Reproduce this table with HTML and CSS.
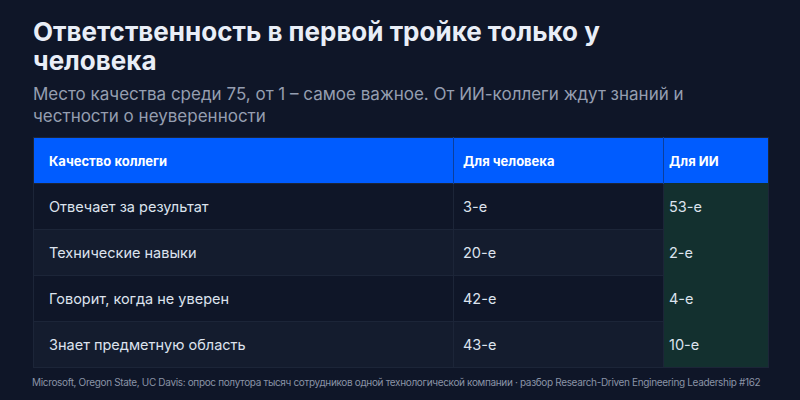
FILE: index.html
```html
<!DOCTYPE html>
<html lang="ru">
<head>
<meta charset="utf-8">
<link rel="stylesheet" href="styles.css">
</head>
<body>
<div class="page">
  <h1 class="title">Ответственность в первой тройке только у человека</h1>
  <p class="subtitle">Место качества среди 75, от 1 – самое важное. От ИИ-коллеги ждут знаний и честности о неуверенности</p>
  <table class="grid">
    <colgroup>
      <col class="c1"><col class="c2"><col class="c3">
    </colgroup>
    <thead>
      <tr><th class="p1">Качество коллеги</th><th class="p2">Для человека</th><th class="p3">Для ИИ</th></tr>
    </thead>
    <tbody>
      <tr><td class="p1">Отвечает за результат</td><td class="p2">3-е</td><td class="p3 ai">53-е</td></tr>
      <tr><td class="p1">Технические навыки</td><td class="p2">20-е</td><td class="p3 ai">2-е</td></tr>
      <tr><td class="p1">Говорит, когда не уверен</td><td class="p2">42-е</td><td class="p3 ai">4-е</td></tr>
      <tr><td class="p1">Знает предметную область</td><td class="p2">43-е</td><td class="p3 ai">10-е</td></tr>
    </tbody>
  </table>
  <p class="source">Microsoft, Oregon State, UC Davis: опрос полутора тысяч сотрудников одной технологической компании · разбор Research-Driven Engineering Leadership #162</p>
</div>
</body>
</html>
```
FILE: styles.css
```css
html, body {
  margin: 0;
  padding: 0;
  background: #0f1628;
}
.page {
  width: 800px;
  height: 400px;
  box-sizing: border-box;
  padding: 17px 32px 0 33px;
  font-family: Inter, "Noto Sans", sans-serif;
  overflow: hidden;
}
.title {
  margin: 0;
  max-width: 620px;
  font-size: 26px;
  line-height: 29px;
  font-weight: 700;
  color: #e9eef7;
}
.subtitle {
  margin: 8px 0 0;
  font-size: 17px;
  line-height: 22px;
  color: #959eb0;
  font-weight: 400;
}
.grid {
  margin-top: 10px;
  width: 735px;
  border-collapse: collapse;
  table-layout: fixed;
  border: 1px solid #1c2538;
}
.c1 { width: 420px; }
.c2 { width: 210px; }
.c3 { width: 105px; }
th, td {
  height: 46px;
  box-sizing: border-box;
  padding: 0;
  text-align: left;
  font-size: 14.5px;
}
th {
  background: #005cff;
  color: #ffffff;
  font-weight: 700;
  font-size: 13px;
  border-left: 1px solid #0b3f9e;
}
th.p1 { border-left: none; }
td {
  color: #dde3ee;
  border-top: 1px solid #1c2538;
  border-left: 1px solid #1c2538;
}
td.p1 { border-left: none; }
.p1 { padding-left: 15px; }
.p2 { padding-left: 9px; }
.p3 { padding-left: 5px; }
tbody tr:nth-child(odd) td { background: #0f1628; }
tbody tr:nth-child(even) td { background: #141c2e; }
tbody tr td.ai {
  background: #13302f;
  border-top-color: #13302f;
  border-left-color: #1c2538;
}
.source {
  margin: 7px 0 0 -1px;
  font-size: 10px;
  line-height: 14px;
  letter-spacing: -0.34px;
  color: #8a93a6;
  white-space: nowrap;
}
```
